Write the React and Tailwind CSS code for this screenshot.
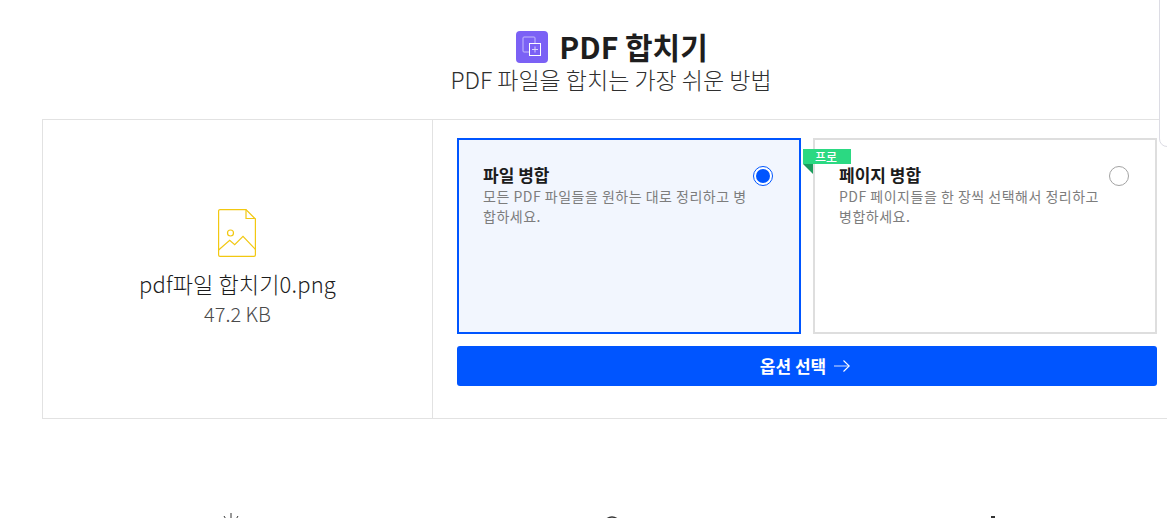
const FONT = '"Noto Sans CJK KR", "Noto Sans", sans-serif';

const MergeIcon = () => (
  <svg width="32" height="32" viewBox="0 0 32 32" fill="none">
    <rect width="32" height="32" rx="4" fill="#7b61f5" />
    <path d="M19 12v-5a1 1 0 0 0-1-1H8a1 1 0 0 0-1 1v13a1 1 0 0 0 1 1h5" stroke="#c5bbfb" strokeWidth="1" />
    <rect x="13.5" y="12.5" width="11" height="12" stroke="#ffffff" strokeWidth="1" />
    <path d="M19 15.5v6M16 18.5h6" stroke="#d8d0fc" strokeWidth="1" />
  </svg>
);

const FileIcon = () => (
  <svg width="39" height="49" viewBox="0 0 39 49" fill="none" stroke="#f2c811" strokeWidth="1.2">
    <path d="M2 .6h26L37.4 10v36a1.4 1.4 0 0 1-1.4 1.4H2A1.4 1.4 0 0 1 .6 46V2A1.4 1.4 0 0 1 2 .6z" />
    <path d="M28 .6V9.5h9.4" />
    <circle cx="12.5" cy="24" r="3" />
    <path d="M.6 41 11.7 31.3l5 4.4L25 27.3l12.4 13" />
  </svg>
);

const ArrowIcon = () => (
  <svg width="16" height="12" viewBox="0 0 16 12" fill="none" stroke="#ffffff" strokeWidth="1.1">
    <path d="M0 6h15" stroke="#c4d6ff" />
    <path d="M9.5.5 15.2 6l-5.7 5.5" />
  </svg>
);

const OptionCard = ({ title, desc, active, children }) => (
  <div className={active ? 'relative w-[344px] h-[196px] border-2 border-[#0055ff] bg-[#f2f6fe] pl-6 pr-[26px] pt-[24px]' : 'relative w-[344px] h-[196px] border-2 border-[#dedede] bg-white pl-6 pr-[26px] pt-[24px]'}>
    {children}
    <div className="flex items-start justify-between">
      <div className="w-[266px]">
        <h3 className="text-[17px] leading-[22px] font-bold text-[#1c1c1c]">{title}</h3>
        <p className="text-[14px] leading-[20px] tracking-[0.5px] text-[#7d7d7d] break-all">{desc}</p>
      </div>
      <div className={active ? 'mt-0.5 flex w-5 h-5 items-center justify-center rounded-full border border-[#0055ff] bg-white' : 'mt-0.5 w-5 h-5 rounded-full border border-[#a3a3a3] bg-white'}>
        {active && <div className="w-[14px] h-[14px] rounded-full bg-[#0055ff]" />}
      </div>
    </div>
  </div>
);

const ProBadge = () => (
  <div className="absolute left-[-12px] top-[9px]">
    <div className="w-12 h-[15px] bg-[#2bd982] text-[12px] leading-[15px] font-medium text-white pl-[12px]">프로</div>
    <div className="w-0 h-0 border-t-[10px] border-l-[10px] border-t-[#1c9c5c] border-l-transparent" />
  </div>
);

const App = () => {
  return (
    <div className="relative h-[518px] w-[1167px] overflow-hidden bg-white" style={{ fontFamily: FONT }}>
      <div className="w-[1222px]">
        {/* Header */}
        <div className="flex flex-col items-center pt-[31px]">
          <div className="flex items-center gap-[11px] h-8 pl-[2px]">
            <MergeIcon />
            <h1 className="pb-[2px] text-[30px] leading-8 font-bold text-[#1e1e1e]">PDF 합치기</h1>
          </div>
          <p className="text-[23px] leading-[32px] font-light text-[#2f2f2f]">PDF 파일을 합치는 가장 쉬운 방법</p>
        </div>

        {/* Main panel */}
        <div className="ml-[42px] mt-[24px] flex h-[300px] w-[1138px] border border-[#e2e2e2]">
          <div className="flex w-[390px] shrink-0 flex-col items-center pt-[89px] border-r border-[#e2e2e2]">
            <FileIcon />
            <p className="mt-[8px] text-[22px] leading-[34px] tracking-[0.15px] font-light text-[#1c1c1c]">pdf파일 합치기0.png</p>
            <p className="text-[20px] leading-[28px] font-light text-[#4a4a4a]">47.2 KB</p>
          </div>
          <div className="pl-[24px] pt-[18px]">
            <div className="flex gap-3 w-[700px]">
              <OptionCard active title="파일 병합" desc="모든 PDF 파일들을 원하는 대로 정리하고 병합하세요." />
              <OptionCard title="페이지 병합" desc="PDF 페이지들을 한 장씩 선택해서 정리하고 병합하세요.">
                <ProBadge />
              </OptionCard>
            </div>
            <button className="mt-3 flex h-10 w-[700px] items-center justify-center gap-2 rounded-[3px] bg-[#0055ff] pr-1 text-[17px] font-bold text-white">
              옵션 선택
              <ArrowIcon />
            </button>
          </div>
        </div>

        {/* Feature row, cut off by the window */}
        <div className="ml-[40px] mt-[94px] grid w-[1143px] grid-cols-3">
          <div className="flex justify-center">
            <svg width="18" height="10" viewBox="0 0 18 10" fill="none" stroke="#333333" strokeWidth="1">
              <path d="M9 0v8M2 3l3 5M16 3l-3 5" />
            </svg>
          </div>
          <div className="flex justify-center">
            <svg width="14" height="10" viewBox="0 0 14 10" fill="none" stroke="#333333" strokeWidth="1.4">
              <path d="M2 5.5Q7 2.5 12 5.5" />
            </svg>
          </div>
          <div className="flex justify-center">
            <svg width="4" height="10" viewBox="0 0 4 10" fill="#333333">
              <rect y="3" width="4" height="3" />
            </svg>
          </div>
        </div>
      </div>

      {/* Corner of a floating panel */}
      <div className="absolute right-[-20px] top-[-10px] h-[157px] w-[28px] rounded-bl-[8px] border border-[#dcdce4] bg-white" />
    </div>
  );
};

export default App;
